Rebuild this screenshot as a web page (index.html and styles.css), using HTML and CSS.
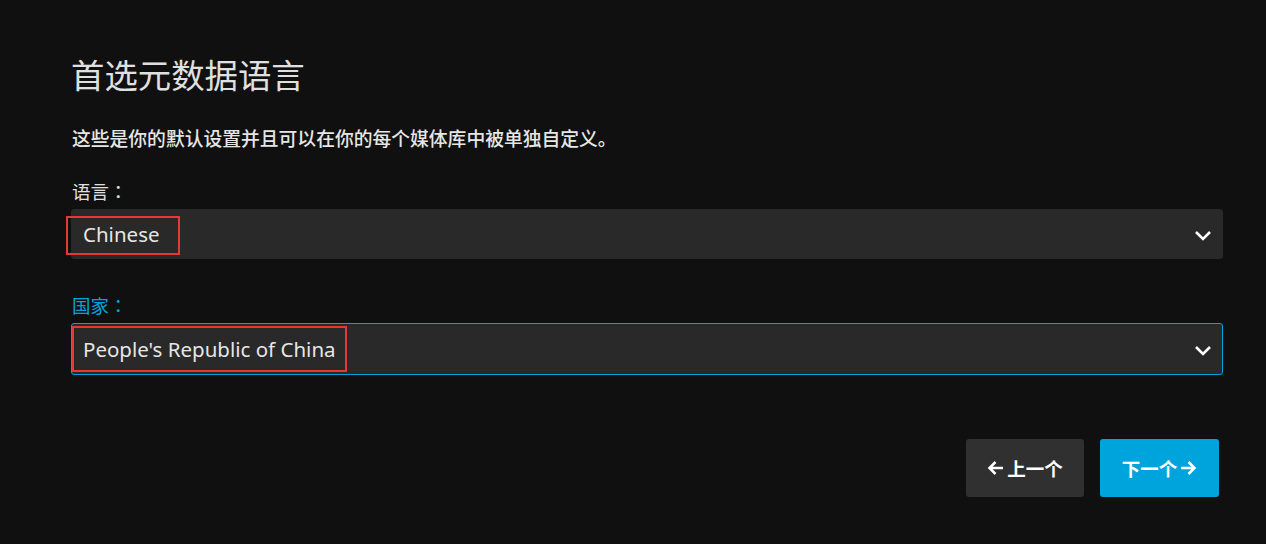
FILE: index.html
```html
<!DOCTYPE HTML>
<html>

<head>
  <meta charset="UTF-8">
  <title>首选元数据语言</title>

  <link rel="stylesheet" href="styles.css">

</head>

<body>
  <div class="wizard">
    <h1 class="title">首选元数据语言</h1>
    <p class="intro">这些是你的默认设置并且可以在你的每个媒体库中被单独自定义。</p>

    <div class="field">
      <label class="field-label">语言：</label>
      <div class="select">
        <span class="select-value">Chinese</span>
        <svg class="chevron" width="18" height="12" viewBox="0 0 18 12"><path d="M2 3 L9 10 L16 3" fill="none" stroke="#fff" stroke-width="2.6"/></svg>
        <span class="mark mark-lang"></span>
      </div>
    </div>

    <div class="field field-country">
      <label class="field-label active">国家：</label>
      <div class="select focused">
        <span class="select-value">People's Republic of China</span>
        <svg class="chevron" width="18" height="12" viewBox="0 0 18 12"><path d="M2 3 L9 10 L16 3" fill="none" stroke="#fff" stroke-width="2.6"/></svg>
        <span class="mark mark-country"></span>
      </div>
    </div>

    <div class="buttons">
      <button class="btn btn-prev">
        <svg class="arrow" width="17" height="16" viewBox="0 0 17 16"><path d="M16 8 H2.5 M8.5 2 L2.5 8 L8.5 14" fill="none" stroke="#fff" stroke-width="2.5"/></svg>
        <span>上一个</span>
      </button>
      <button class="btn btn-next">
        <span>下一个</span>
        <svg class="arrow" width="17" height="16" viewBox="0 0 17 16"><path d="M1 8 H14.5 M8.5 2 L14.5 8 L8.5 14" fill="none" stroke="#fff" stroke-width="2.5"/></svg>
      </button>
    </div>
  </div>
</body>

</html>
```

FILE: styles.css
```css
body {
  margin: 0;
  background-color: #101010;
  color: #ddd;
  font-family: "Noto Sans", "Noto Sans CJK SC", sans-serif;
}

.wizard {
  padding: 50px 43px 0 71px;
}

.title {
  margin: 0;
  font-size: 33.4px;
  font-weight: 400;
  line-height: 50px;
  color: #e0e0e0;
}

.intro {
  margin: 24px 0 0 1px;
  font-size: 18.8px;
  font-weight: 500;
  line-height: 30px;
  color: #e6e6e6;
}

.field {
  margin-top: 23px;
}

.field-country {
  margin-top: 32px;
}

.field-label {
  display: block;
  margin-left: 1px;
  font-family: "Noto Sans", "Noto Sans CJK JP", sans-serif;
  font-size: 18.5px;
  line-height: 30px;
  color: #e0e0e0;
}

.field-label.active {
  color: #00a4dc;
}

.select {
  position: relative;
  display: flex;
  align-items: center;
  justify-content: space-between;
  height: 50px;
  margin-top: 2px;
  padding: 0 10px 0 11px;
  background-color: #292929;
  border: 1px solid #292929;
  border-radius: 3px;
  box-sizing: border-box;
}

.select.focused {
  height: 52px;
  border-color: #00a4dc;
}

.select-value {
  font-size: 20.5px;
  color: #e6e6e6;
}

.chevron {
  margin-top: 2px;
}

.mark {
  position: absolute;
  border: 2px solid #e53935;
  box-sizing: border-box;
}

.mark-lang {
  left: -6px;
  top: 6px;
  width: 114px;
  height: 39px;
}

.mark-country {
  left: 0;
  top: 2px;
  width: 275px;
  height: 46px;
}

.buttons {
  display: flex;
  justify-content: flex-end;
  gap: 16px;
  margin-top: 64px;
  padding-right: 4px;
}

.btn {
  display: flex;
  align-items: center;
  justify-content: center;
  gap: 3px;
  width: 118px;
  height: 58px;
  padding: 0;
  border: none;
  border-radius: 3px;
  font-family: "Noto Sans", "Noto Sans CJK SC", sans-serif;
  font-size: 18.5px;
  font-weight: 700;
  color: #fff;
}

.btn-prev {
  background-color: #303030;
}

.btn-next {
  width: 119px;
  background-color: #00a4dc;
}
```
